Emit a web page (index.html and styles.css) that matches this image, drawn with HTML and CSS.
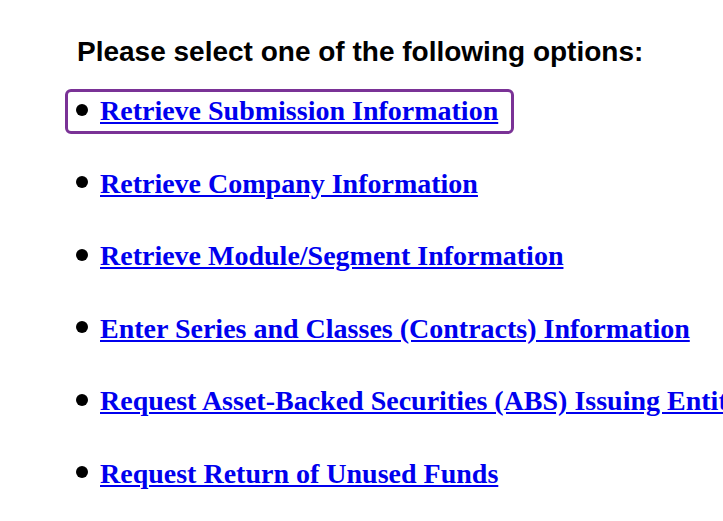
FILE: index.html
```html
<!DOCTYPE html>
<html>
<head>
<meta charset="utf-8">
<link rel="stylesheet" href="styles.css">
</head>
<body>
<div class="page">
  <h2 class="title">Please select one of the following options:</h2>
  <ul class="options">
    <li class="option focused"><span class="dot"></span><a href="#">Retrieve Submission Information</a></li>
    <li class="option"><span class="dot"></span><a href="#">Retrieve Company Information</a></li>
    <li class="option"><span class="dot"></span><a href="#">Retrieve Module/Segment Information</a></li>
    <li class="option"><span class="dot"></span><a href="#">Enter Series and Classes (Contracts) Information</a></li>
    <li class="option"><span class="dot"></span><a href="#">Request Asset-Backed Securities (ABS) Issuing Entities Information</a></li>
    <li class="option"><span class="dot"></span><a href="#">Request Return of Unused Funds</a></li>
  </ul>
</div>
</body>
</html>
```
FILE: styles.css
```css
html, body {
  margin: 0;
  padding: 0;
  background: #fff;
  overflow: hidden;
}
.page {
  padding: 36px 0 0 76px;
  width: 1100px;
}
.title {
  margin: 0 0 27px 1px;
  font-family: "Liberation Sans", Arial, sans-serif;
  font-weight: bold;
  font-size: 28px;
  line-height: 32px;
  color: #000;
}
.options {
  list-style: none;
  margin: 0;
  padding: 0;
  display: flex;
  flex-direction: column;
  gap: 40.6px;
}
.option {
  display: flex;
  align-items: center;
  gap: 12px;
  white-space: nowrap;
  font-family: "Liberation Serif", "Times New Roman", serif;
  font-weight: bold;
  font-size: 28px;
  line-height: 32px;
}
.dot {
  width: 12px;
  height: 12px;
  border-radius: 50%;
  background: #000;
  margin-top: -3px;
  flex: none;
}
.option a {
  color: #0000ee;
  text-decoration: underline;
}
.focused {
  width: fit-content;
  margin: -6px 0 -7px -11px;
  padding: 3px 13px 4px 8px;
  border: 3px solid #7a3296;
  border-radius: 6px;
}
```
